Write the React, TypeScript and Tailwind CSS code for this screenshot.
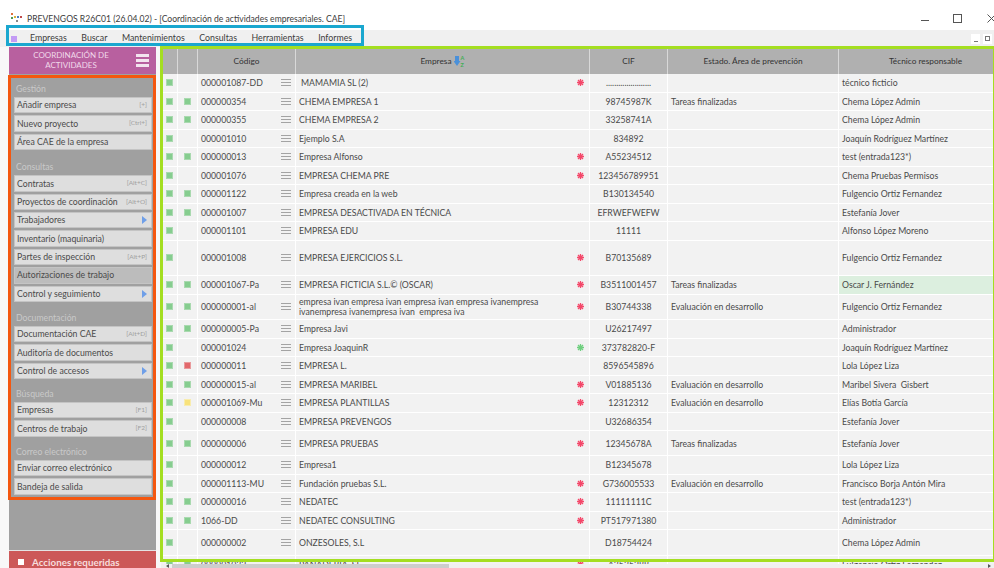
import React from "react";

type Row = {
  h: number;
  b?: "g" | "r" | "y";
  code: string;
  name: React.ReactNode;
  mark?: "r" | "g";
  cif: string;
  state?: string;
  tech: string;
  hi?: boolean;
  indent?: boolean;
};

const T1 = "Tareas finalizadas";
const E1 = "Evaluación en desarrollo";

const rows: Row[] = [
  { h: 18.5, code: "000001087-DD", name: "MAMAMIA SL (2)", indent: true, mark: "r", cif: "......................", tech: "técnico ficticio" },
  { h: 18.5, b: "g", code: "000000354", name: "CHEMA EMPRESA 1", cif: "98745987K", state: T1, tech: "Chema López Admin" },
  { h: 18.5, b: "g", code: "000000355", name: "CHEMA EMPRESA 2", cif: "33258741A", tech: "Chema López Admin" },
  { h: 18.5, code: "000001010", name: "Ejemplo S.A", cif: "834892", tech: "Joaquín Rodríguez Martínez" },
  { h: 18.5, b: "g", code: "000000013", name: "Empresa Alfonso", mark: "r", cif: "A55234512", tech: "test (entrada123*)" },
  { h: 18.5, code: "000001076", name: "EMPRESA CHEMA PRE", mark: "r", cif: "123456789951", tech: "Chema Pruebas Permisos" },
  { h: 18.5, b: "g", code: "000001122", name: "Empresa creada en la web", cif: "B130134540", tech: "Fulgencio Ortiz Fernandez" },
  { h: 18.5, b: "g", code: "000001007", name: "EMPRESA DESACTIVADA EN TÉCNICA", cif: "EFRWEFWEFW", tech: "Estefanía Jover" },
  { h: 18.5, code: "000001101", name: "EMPRESA EDU", cif: "11111", tech: "Alfonso López Moreno" },
  { h: 35, code: "000001008", name: "EMPRESA EJERCICIOS S.L.", mark: "r", cif: "B70135689", tech: "Fulgencio Ortiz Fernandez" },
  { h: 19, b: "g", code: "000001067-Pa", name: "EMPRESA FICTICIA S.L.© (OSCAR)", mark: "r", cif: "B3511001457", state: T1, tech: "Oscar J. Fernández", hi: true },
  {
    h: 25,
    b: "g",
    code: "000000001-al",
    name: (
      <>
        empresa ivan empresa ivan empresa ivan empresa ivanempresa
        <br />
        ivanempresa ivanempresa ivan&nbsp; empresa iva
      </>
    ),
    mark: "r",
    cif: "B30744338",
    state: E1,
    tech: "Fulgencio Ortiz Fernandez",
  },
  { h: 19, b: "g", code: "000000005-Pa", name: "Empresa Javi", cif: "U26217497", tech: "Administrador" },
  { h: 18.5, code: "000001024", name: "Empresa JoaquinR", mark: "g", cif: "373782820-F", tech: "Joaquín Rodríguez Martínez" },
  { h: 18.5, b: "r", code: "000000011", name: "EMPRESA L.", cif: "8596545896", tech: "Lola López Liza" },
  { h: 18.5, b: "g", code: "000000015-al", name: "EMPRESA MARIBEL", mark: "r", cif: "V01885136", state: E1, tech: "Maribel Sivera  Gisbert" },
  { h: 18.5, b: "y", code: "000001069-Mu", name: "EMPRESA PLANTILLAS", mark: "r", cif: "12312312", state: E1, tech: "Elías Botía García" },
  { h: 18.5, code: "000000008", name: "EMPRESA PREVENGOS", cif: "U32686354", tech: "Estefanía Jover" },
  { h: 25, b: "g", code: "000000006", name: "EMPRESA PRUEBAS", mark: "r", cif: "12345678A", state: T1, tech: "Estefanía Jover" },
  { h: 18.5, code: "000000012", name: "Empresa1", cif: "B12345678", tech: "Lola López Liza" },
  { h: 18.5, code: "000001113-MU", name: "Fundación pruebas S.L.", mark: "r", cif: "G736005533", state: E1, tech: "Francisco Borja Antón Mira" },
  { h: 18.5, b: "g", code: "000000016", name: "NEDATEC", mark: "r", cif: "11111111C", tech: "test (entrada123*)" },
  { h: 18.5, b: "g", code: "1066-DD", name: "NEDATEC CONSULTING", mark: "r", cif: "PT517971380", tech: "Administrador" },
  { h: 25.5, code: "000000002", name: "ONZESOLES, S.L", cif: "D18754424", tech: "Chema López Admin" },
  { h: 18.5, b: "g", code: "000001032", name: "PANADERIA, SL", mark: "r", cif: "A3535288", tech: "Fulgencio Ortiz Fernandez" },
];

const MENU = ["Empresas", "Buscar", "Mantenimientos", "Consultas", "Herramientas", "Informes"];

function Status({ tone }: { tone?: "g" | "r" | "y" }) {
  if (!tone) return null;
  const cls =
    tone === "g"
      ? "bg-[#86cd8f] border-[#a9d9af]"
      : tone === "r"
        ? "bg-[#e2686c] border-[#e99a9c]"
        : "bg-[#f8e27c] border-[#f8ecae]";
  return <span className={`block h-[7px] w-[7px] border ${cls}`} />;
}

function Asterisk({ tone }: { tone: "r" | "g" }) {
  const c = tone === "r" ? "#f4486a" : "#6fcf7f";
  return (
    <svg width="7" height="7" viewBox="0 0 7 7" stroke={c} strokeWidth="1.3">
      <path d="M3.5 0v7M0 3.5h7M1 1l5 5M6 1L1 6" />
    </svg>
  );
}

function Lines() {
  return (
    <svg width="10" height="9" viewBox="0 0 10 9" stroke="#a3a3a3" strokeWidth="1">
      <path d="M0 1.5h10M0 4.5h10M0 7.5h10" />
    </svg>
  );
}

function SideButton({
  label,
  keys,
  more,
  active,
}: {
  label: string;
  keys?: string;
  more?: boolean;
  active?: boolean;
}) {
  return (
    <div
      className={`mb-[2px] flex h-[16.4px] items-center justify-between whitespace-nowrap border border-[#c4c4c4] pl-[2px] pr-[4px] text-[8.7px] leading-none text-[#4a4a4a] ${
        active ? "bg-[#bcbcbc]" : "bg-[#dedede]"
      }`}
    >
      <span className="pt-[1px]">{label}</span>
      {keys && <span className="text-[6.5px] text-[#a0a0a0]">{keys}</span>}
      {more && <span className="h-0 w-0 border-y-[4px] border-l-[5px] border-y-transparent border-l-[#6f9fe8]" />}
    </div>
  );
}

function SideLabel({ text, h }: { text: string; h: string }) {
  return (
    <div className={`flex items-end pb-[2px] pl-[2px] text-[8.7px] leading-[12px] text-[#c9c9c9] ${h}`}>{text}</div>
  );
}

function SortIcon() {
  return (
    <svg width="11" height="13" viewBox="0 0 11 13">
      <path d="M1 1h4v5h1.5L3 11 -0.5 6H1z" fill="#4a90d9" />
      <text x="6.5" y="5" fontSize="5.5" fill="#3fae55" fontFamily="Lato, sans-serif" fontWeight="700">A</text>
      <text x="6.5" y="11.5" fontSize="5.5" fill="#3fae55" fontFamily="Lato, sans-serif" fontWeight="700">Z</text>
    </svg>
  );
}

export default function App() {
  return (
    <div className="relative flex h-[568px] w-[994px] flex-col overflow-hidden bg-[#f8f8f8] font-['Lato',sans-serif] text-[#444]">
      {/* window caption */}
      <div className="flex h-[30px] shrink-0 items-start bg-white pl-[11px] pt-[11.5px]">
        <svg width="12" height="10" viewBox="0 0 12 10" className="mt-[1px]">
          <rect x="0" y="0" width="2" height="2" fill="#e0703a" />
          <rect x="3" y="3" width="2" height="2" fill="#d9b23a" />
          <rect x="0" y="4" width="2" height="2" fill="#4f9a52" />
          <rect x="6" y="3" width="2" height="2" fill="#4a7fc0" />
          <rect x="9" y="3" width="2" height="2" fill="#c04a4a" />
          <rect x="5" y="7" width="2" height="2" fill="#888" />
        </svg>
        <span className="ml-[4px] whitespace-nowrap text-[8.6px] leading-[14px] text-[#3c3c3c]">
          PREVENGOS R26C01 (26.04.02) - [Coordinación de actividades empresariales. CAE]
        </span>
        <div className="ml-auto flex items-center">
          <span className="mt-[7px] block h-[1px] w-[8px] bg-[#555]" />
          <span className="ml-[24px] mt-[2px] block h-[9px] w-[9px] border border-[#555]" />
          <svg width="9" height="9" viewBox="0 0 9 9" stroke="#555" strokeWidth="1" className="-mr-[2px] ml-[25px] mt-[2px]">
            <path d="M0.5 0.5l8 8M8.5 0.5l-8 8" />
          </svg>
        </div>
      </div>

      {/* menu strip */}
      <div className="flex h-[17px] shrink-0 items-center bg-[#f0f0f0] pl-[11px]">
        <span className="block h-[6px] w-[6px] bg-[#c39bf5]" />
        <div className="ml-[13px] flex gap-[14.5px] text-[8.8px] leading-none text-[#3c3c3c]">
          {MENU.map((m) => (
            <span key={m}>{m}</span>
          ))}
        </div>
        <div className="ml-auto mr-[2px] flex gap-[3px]">
          <span className="flex h-[10px] w-[9px] items-end justify-center bg-white pb-[2px]">
            <span className="block h-[1px] w-[4px] bg-[#777]" />
          </span>
          <span className="flex h-[10px] w-[9px] items-center justify-center bg-white">
            <span className="block h-[5px] w-[5px] border border-[#777]" />
          </span>
        </div>
      </div>

      <div className="flex min-h-0 flex-1 pl-[9px]">
        {/* navigation panel */}
        <aside className="flex w-[147px] shrink-0 flex-col bg-[#a0a0a0]">
          <div className="flex h-[27px] shrink-0 items-center bg-[#b8609f] text-white">
            <div className="w-[124px] text-center text-[8px] leading-[9.5px] text-[#f0d8ea]">
              COORDINACIÓN DE
              <br />
              ACTIVIDADES
            </div>
            <div className="ml-[3px] flex w-[13px] flex-col gap-[2px]">
              <span className="block h-[3px] bg-[#f3e4ef]" />
              <span className="block h-[3px] bg-[#f3e4ef]" />
              <span className="block h-[3px] bg-[#f3e4ef]" />
            </div>
          </div>
          <div className="flex-1 pl-[5px] pr-[4px]">
            <SideLabel text="Gestión" h="h-[23px]" />
            <SideButton label="Añadir empresa" keys="[+]" />
            <SideButton label="Nuevo proyecto" keys="[Ctrl+]" />
            <SideButton label="Área CAE de la empresa" />
            <SideLabel text="Consultas" h="h-[23px]" />
            <SideButton label="Contratas" keys="[Alt+C]" />
            <SideButton label="Proyectos de coordinación" keys="[Alt+O]" />
            <SideButton label="Trabajadores" more />
            <SideButton label="Inventario (maquinaria)" />
            <SideButton label="Partes de inspección" keys="[Alt+P]" />
            <SideButton label="Autorizaciones de trabajo" active />
            <SideButton label="Control y seguimiento" more />
            <SideLabel text="Documentación" h="h-[22px]" />
            <SideButton label="Documentación CAE" keys="[Alt+D]" />
            <SideButton label="Auditoría de documentos" />
            <SideButton label="Control de accesos" more />
            <SideLabel text="Búsqueda" h="h-[21px]" />
            <SideButton label="Empresas" keys="[F1]" />
            <SideButton label="Centros de trabajo" keys="[F2]" />
            <SideLabel text="Correo electrónico" h="h-[21px]" />
            <SideButton label="Enviar correo electrónico" />
            <SideButton label="Bandeja de salida" />
          </div>
          <div className="flex h-[18px] shrink-0 items-start border-t border-[#e4e4e4] bg-[#cc5858] pl-[9px] pt-[6px] text-[9.8px] font-bold text-[#f6dddd]">
            <span className="mt-[2px] block h-[6px] w-[6px] bg-white" />
            <span className="ml-[8px] leading-[10px]">Acciones requeridas</span>
          </div>
        </aside>

        {/* company table */}
        <main className="ml-[5px] flex min-w-0 flex-1 flex-col pt-[2px]">
          <div className="grid h-[25px] shrink-0 grid-cols-[17px_20px_98px_294px_78px_171px_1fr] bg-[#b0b0b0] text-[8.3px] text-[#333]">
            <div className="border-r border-[#d8d8d8]" />
            <div className="border-r border-[#d8d8d8]" />
            <div className="flex items-center justify-center border-r border-[#d8d8d8]">Código</div>
            <div className="flex items-center justify-center gap-[2px] border-r border-[#d8d8d8]">
              Empresa <SortIcon />
            </div>
            <div className="flex items-center justify-center border-r border-[#d8d8d8]">CIF</div>
            <div className="flex items-center justify-center border-r border-[#d8d8d8]">Estado. Área de prevención</div>
            <div className="flex items-center justify-center pl-[18px]">Técnico responsable</div>
          </div>
          <div className="min-h-0 flex-1 overflow-hidden">
            {rows.map((r) => (
              <div
                key={r.code}
                style={{ height: r.h }}
                className="grid grid-cols-[17px_20px_98px_294px_78px_171px_1fr] border-b border-white bg-[#f2f2f2] text-[8.7px] leading-[10px] text-[#4a4a4a]"
              >
                <div className="flex items-center justify-center border-r border-white pl-[1px]">
                  <Status tone="g" />
                </div>
                <div className="flex items-center justify-center border-r border-white">
                  <Status tone={r.b} />
                </div>
                <div className="flex items-center justify-between border-r border-white pl-[3px] pr-[4px]">
                  <span className="pt-[1px]">{r.code}</span>
                  <Lines />
                </div>
                <div className={`flex items-center justify-between border-r border-white pr-[5px] ${r.indent ? "pl-[5px]" : "pl-[3px]"}`}>
                  <span className="whitespace-nowrap pt-[1px]">{r.name}</span>
                  {r.mark && <Asterisk tone={r.mark} />}
                </div>
                <div className="flex items-center justify-center border-r border-white pt-[1px]">{r.cif}</div>
                <div className="flex items-center border-r border-white pl-[3px] pt-[1px]">{r.state}</div>
                <div className={`flex items-center whitespace-pre pl-[3px] pt-[1px] ${r.hi ? "bg-[#dcefdf]" : ""}`}>{r.tech}</div>
              </div>
            ))}
          </div>
          <div className="flex h-[4px] shrink-0 items-center bg-[#f0f0f0]">
            <span className="ml-[5px] h-0 w-0 border-y-[2px] border-r-[3px] border-y-transparent border-r-[#555]" />
            <span className="ml-[3px] h-full w-[277px] bg-[#cdcdcd]" />
            <span className="ml-auto mr-[3px] h-0 w-0 border-y-[2px] border-l-[3px] border-y-transparent border-l-[#555]" />
          </div>
        </main>
      </div>

      {/* highlight frames laid over the window */}
      <div className="pointer-events-none absolute left-[6px] top-[25px] h-[21px] w-[358px] border-[3px] border-[#1aa7cf]" />
      <div className="pointer-events-none absolute left-[8px] top-[75px] h-[425px] w-[148px] border-[3px] border-[#f4570f]" />
      <div className="pointer-events-none absolute left-[160px] top-[46px] h-[516px] w-[834px] border-y-[3px] border-l-[3px] border-r border-[#a4de21]" />
    </div>
  );
}
